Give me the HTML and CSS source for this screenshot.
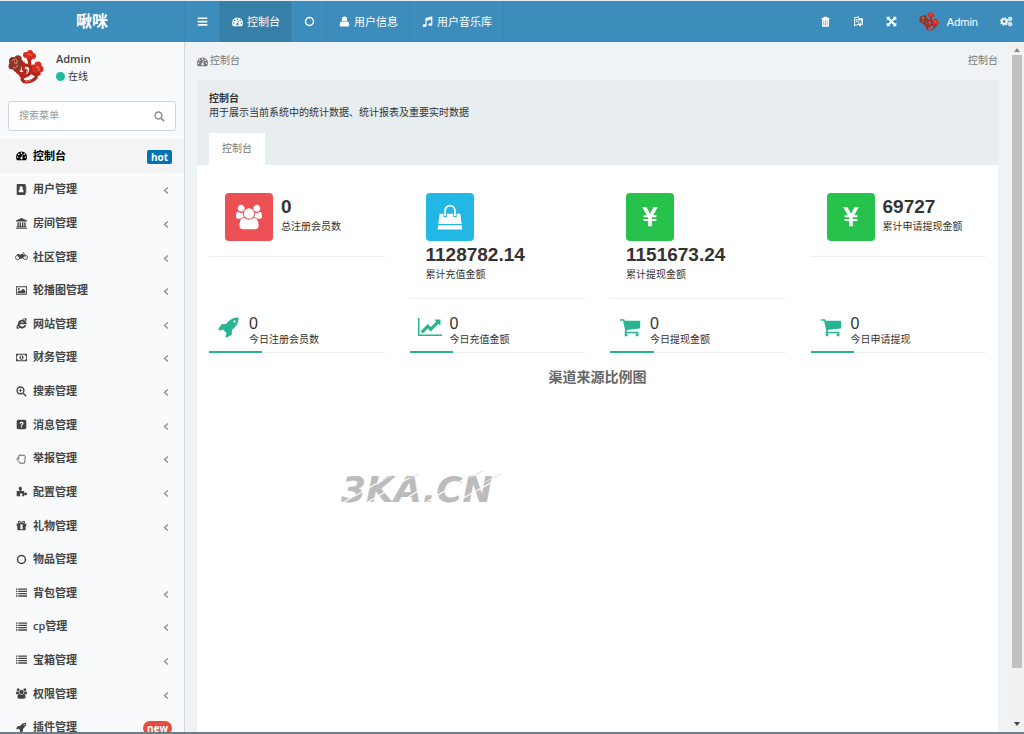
FILE: index.html
```html
<!DOCTYPE html>
<html lang="zh-CN">
<head>
<meta charset="utf-8">
<title>控制台</title>
<link rel="stylesheet" href="styles.css">
</head>
<body>
<svg class="sprite" aria-hidden="true">
  <symbol id="dashboard" viewBox="0 0 1792 1792"><path d="M384 1152q0-53-37.500-90.500t-90.500-37.500-90.500 37.500-37.500 90.500 37.500 90.500 90.500 37.500 90.500-37.500 37.500-90.500zm192-448q0-53-37.500-90.500t-90.500-37.500-90.500 37.500-37.500 90.500 37.500 90.500 90.500 37.500 90.500-37.500 37.500-90.500zm428 481l101-382q6-26-7.500-48.500t-38.500-29.500-48 6.500-30 39.500l-101 382q-60 5-107 43.500t-63 98.500q-20 77 20 146t117 89 146-20 89-117q16-60-6-117t-72-91zm660-33q0-53-37.500-90.500t-90.500-37.500-90.500 37.500-37.500 90.500 37.500 90.500 90.500 37.500 90.500-37.500 37.500-90.500zm-640-640q0-53-37.500-90.500t-90.500-37.500-90.500 37.500-37.500 90.500 37.500 90.500 90.500 37.500 90.500-37.500 37.500-90.500zm448 192q0-53-37.500-90.500t-90.500-37.500-90.500 37.500-37.500 90.500 37.500 90.500 90.500 37.500 90.500-37.500 37.500-90.500zm320 448q0 261-141 483-19 29-54 29h-1402q-35 0-54-29-141-221-141-483 0-182 71-348t191-286 286-191 348-71 348 71 286 191 191 286 71 348z"/></symbol>
  <symbol id="users" viewBox="0 0 1920 1792"><path d="M593 896q-162 5-265 128h-134q-82 0-138-40.500t-56-118.500q0-353 124-353 6 0 43.500 21t97.500 42.500 119 21.500q67 0 133-23-5 37-5 66 0 139 81 256zm1071 637q0 120-73 189.500t-194 69.500h-874q-121 0-194-69.500t-73-189.500q0-53 3.500-103.500t14-109 26.500-108.500 43-97.500 62-81 85.500-53.500 111.500-20q10 0 43 21.500t73 48 107 48 135 21.500 135-21.500 107-48 73-48 43-21.500q61 0 111.500 20t85.500 53.500 62 81 43 97.500 26.500 108.500 14 109 3.500 103.500zm-1024-1277q0 106-75 181t-181 75-181-75-75-181 75-181 181-75 181 75 75 181zm704 384q0 159-112.500 271.500t-271.500 112.500-271.500-112.500-112.500-271.500 112.500-271.500 271.500-112.500 271.500 112.500 112.500 271.500zm576 225q0 78-56 118.500t-138 40.500h-134q-103-123-265-128 81-117 81-256 0-29-5-66 66 23 133 23 59 0 119-21.500t97.500-42.500 43.500-21q124 0 124 353zm-128-609q0 106-75 181t-181 75-181-75-75-181 75-181 181-75 181 75 75 181z"/></symbol>
  <symbol id="cart" viewBox="0 0 1792 1792"><path d="M704 1536q0 52-38 90t-90 38-90-38-38-90 38-90 90-38 90 38 38 90zm896 0q0 52-38 90t-90 38-90-38-38-90 38-90 90-38 90 38 38 90zm128-1088v512q0 24-16.500 42.500t-40.500 21.500l-1044 122q13 60 13 70 0 16-24 64h920q26 0 45 19t19 45-19 45-45 19h-1024q-26 0-45-19t-19-45q0-11 8-31.500t16-36 21.500-40 15.500-29.500l-177-823h-204q-26 0-45-19t-19-45 19-45 45-19h256q16 0 28.500 6.500t19.500 15.500 13 24.500 8 26 5.500 29.500 4.500 26h1201q26 0 45 19t19 45z"/></symbol>
  <symbol id="rocket" viewBox="0 0 1792 1792"><path d="M1440 448q0-40-28-68t-68-28-68 28-28 68 28 68 68 28 68-28 28-68zm224-288q0 249-75.500 430.500t-253.500 360.500q-81 80-195 176l-20 379q-2 16-16 26l-384 224q-7 4-16 4-12 0-23-9l-64-64q-13-14-8-32l85-276-281-281-276 85q-3 1-9 1-14 0-23-9l-64-64q-17-19-5-39l224-384q10-14 26-16l379-20q96-114 176-195 188-187 358-258t431-71q14 0 24 9.500t10 22.500z"/></symbol>
  <symbol id="chart" viewBox="0 0 2048 1792"><path d="M2048 1536v128h-2048v-1536h128v1408h1920zm-128-1248v435q0 21-19.500 29.500t-35.500-7.500l-121-121-633 633q-10 10-23 10t-23-10l-233-233-416 416-192-192 585-585q10-10 23-10t23 10l233 233 464-464-121-121q-16-16-7.500-35.500t29.500-19.500h435q14 0 23 9t9 23z"/></symbol>
  <symbol id="bag" viewBox="0 0 24 24"><path d="M2.500 9h19l1.300 9.500H1.200zM1 19.500h22l.3 4H.7z"/><path d="M7.500 12V6a4.500 4.500 0 0 1 9 0v6" fill="none" stroke="#23b7e5" stroke-width="3.200"/><path d="M7.500 11V6a4.500 4.500 0 0 1 9 0v5" fill="none" stroke="currentColor" stroke-width="1.700"/></symbol>
  <symbol id="yen" viewBox="0 0 24 24"><path d="M3.500 1h4.600L12 8.500 15.900 1h4.600l-5 9H19v2.200h-5v1.900h5v2.300h-5V22h-4v-5.600H5v-2.300h5v-1.900H5V10h3.500z"/></symbol>
  <symbol id="bars" viewBox="0 0 16 16"><path d="M1 2h14v2.500H1zM1 6.800h14v2.500H1zM1 11.600h14v2.500H1z"/></symbol>
  <symbol id="circle" viewBox="0 0 16 16"><circle cx="8" cy="8" r="5.800" fill="none" stroke="currentColor" stroke-width="2.200"/></symbol>
  <symbol id="user" viewBox="0 0 16 16"><circle cx="8" cy="4.500" r="3.900"/><path d="M4.500 7.500c2 2 5 2 7 0 2.400.4 3.500 3 3.500 5.500 0 1.500-1 2.300-2.200 2.300H3.200C2 15.300 1 14.500 1 13c0-2.500 1.100-5.100 3.500-5.500z"/></symbol>
  <symbol id="music" viewBox="0 0 16 16"><path d="M5 3l10-2.500V12c0 1.400-1.300 2.300-3 2.300s-2.700-.7-2.700-1.800 1.200-2 2.700-2c.5 0 .9.100 1.300.3V5.200L6.700 7v6.700c0 1.300-1.300 2.200-3 2.200S1 15.200 1 14s1.200-1.900 2.700-1.900c.5 0 .9.100 1.300.2z"/></symbol>
  <symbol id="trash" viewBox="0 0 16 16"><path fill-rule="evenodd" d="M5.500 1h5l.8 1.800H14v1.700h-1V14c0 .8-.6 1.500-1.400 1.500H4.400C3.600 15.500 3 14.800 3 14V4.500H2V2.800h2.700zM5.200 6v7h.8V6zm2.400 0v7h.8V6zM10 6v7h.8V6z"/></symbol>
  <symbol id="language" viewBox="0 0 16 16"><path fill-rule="evenodd" d="M1.500 2L8 .5l1 2.300 5.500 1V13L11 12.500l1 3-4-2.500-6.500 1.500zm1.300 1.200v9.600L8 11.500V2zM9.800 5L8.600 10.800l1.100.3.300-1.300 1.700.4.300 1.500 1.100.3L11.300 5.400z"/><path d="M3.500 5.500l4-.8M5.500 4v2c0 2-1 3-2 3.500M4 7c.9 1.300 2 1.800 3.400 2" fill="none" stroke="currentColor" stroke-width="1"/></symbol>
  <symbol id="expand" viewBox="0 0 16 16"><path d="M1 1h5.500L4.800 2.700 8 5.900l3.200-3.200L9.500 1H15v5.500l-1.700-1.700L10.100 8l3.200 3.200L15 9.500V15H9.500l1.700-1.700L8 10.100l-3.200 3.200L6.500 15H1V9.500l1.700 1.700L5.900 8 2.700 4.800 1 6.500z"/></symbol>
  <symbol id="cogs" viewBox="0 0 20 16"><g fill="none" stroke="currentColor"><circle cx="6.500" cy="8" r="3.700" stroke-width="2.900"/><circle cx="6.500" cy="8" r="5.700" stroke-width="1.600" stroke-dasharray="2.240"/><circle cx="15.500" cy="4" r="2" stroke-width="1.900"/><circle cx="15.500" cy="4" r="3.200" stroke-width="1.200" stroke-dasharray="1.260"/><circle cx="15.500" cy="12" r="2" stroke-width="1.900"/><circle cx="15.500" cy="12" r="3.200" stroke-width="1.200" stroke-dasharray="1.260"/></g></symbol>
  <symbol id="book" viewBox="0 0 16 16"><path fill-rule="evenodd" d="M2.500 0h10c.8 0 1.500.6 1.500 1.500v2.300h1v2h-1v1.200h1v2h-1v1.200h1v2h-1v2.300c0 .9-.7 1.500-1.500 1.500h-10C1.600 16 1 15.400 1 14.500v-13C1 .6 1.600 0 2.500 0zm5 3.200a2.300 2.300 0 0 0-1.600 4C4.500 7.600 3.900 9.500 3.900 12h7.200c0-2.500-.6-4.400-2-4.800a2.300 2.300 0 0 0-1.600-4z"/></symbol>
  <symbol id="bank" viewBox="0 0 16 16"><path d="M8 0l8 3.500V5H0V3.500zM2 6h2v6h1.300V6h2v6h1.400V6h2v6H12V6h2v6h1v1.300H1V12h1zM0 14h16v1.600H0z"/></symbol>
  <symbol id="motorcycle" viewBox="0 0 20 16"><g fill="none" stroke="currentColor"><circle cx="4" cy="9.500" r="3.300" stroke-width="1.300"/><circle cx="16" cy="9.500" r="3.300" stroke-width="1.300"/><path d="M4 9.500l3-3h5M11 2.500h2.500L16 9.500" stroke-width="1.300"/></g><path d="M3 4.500c2-1 4 0 5 .8 1-1.200 3-1.800 5-.8l1 2.500-3 4.500H6.500C7 8 5.500 6 3 6z"/></symbol>
  <symbol id="image" viewBox="0 0 18 16"><path fill-rule="evenodd" d="M0 1h18v14H0zM1.400 2.500v11h15.200v-11z"/><circle cx="4.500" cy="5.500" r="1.600"/><path d="M2.700 12.300v-2.600l2.500-2.300 1.700 1.700L11.500 5l3.800 3.500v3.800z"/></symbol>
  <symbol id="ie" viewBox="0 0 16 16"><path d="M13.700 10.600A5 5 0 1 1 13.900 7.800H5" fill="none" stroke="currentColor" stroke-width="2.800"/><path d="M2.300 9C0 13 0 16 3 15.500c1.400-.2 3-1.200 4-2L5.500 13c-3 2-3.600.4-2.400-2zM9 1.500C12 0 15.300-.6 15.500 2c.1 1.200-.4 2.600-1 3.500l-1-1.500c.8-2-.4-2.500-3-1.600z"/></symbol>
  <symbol id="money" viewBox="0 0 18 16"><path fill-rule="evenodd" d="M0 2h18v12H0zm3.500 1.300c0 1.200-.9 2-2.200 2v5.400c1.300 0 2.200.8 2.200 2h11c0-1.200.9-2 2.200-2V5.300c-1.300 0-2.200-.8-2.200-2zM9 4.200c2 0 3.300 1.600 3.300 3.800S11 11.800 9 11.800 5.700 10.200 5.700 8 7 4.200 9 4.200zM7.500 6.500v1h.8v2.300h-.8v.8h3v-.8h-.8V5.300h-.9z"/></symbol>
  <symbol id="zoom" viewBox="0 0 16 16"><circle cx="6.500" cy="6.500" r="5" fill="none" stroke="currentColor" stroke-width="2"/><path d="M10 11.500l1.500-1.500 4 4-1.500 1.600zM3.800 6h2.100V3.800h1.200V6h2.100v1.200H7.100v2.100H5.900V7.200H3.800z"/></symbol>
  <symbol id="search" viewBox="0 0 16 16"><circle cx="6.500" cy="6.500" r="5" fill="none" stroke="currentColor" stroke-width="2"/><path d="M9.800 11.500l1.700-1.700 4 4-1.600 1.700z"/></symbol>
  <symbol id="question" viewBox="0 0 16 16"><path fill-rule="evenodd" d="M3.500 1h9C14 1 15 2 15 3.500v9c0 1.500-1 2.500-2.500 2.500h-9C2 15 1 14 1 12.500v-9C1 2 2 1 3.500 1zM5 6l1.600.8C7.400 5.400 9 5.700 9 6.500c0 1-2 1.300-2 3.300h1.800c0-1.400 2.200-1.600 2.200-3.600C11 3.400 6.300 2.800 5 6zm2 4.700v1.800h1.800v-1.800z"/></symbol>
  <symbol id="hand" viewBox="0 0 16 16"><path d="M4 9V4.300c0-1.600 1.900-1.600 2.100-.3 0-1.800 2-2 2.400-.4.200-1.400 2.300-1.300 2.300.5.400-1.200 2.400-1.100 2.400.8v5.400c0 1-.8 2-1 4.500H5.700c0-1.700-4-4.500-4.400-6C1 7.300 3 7.200 4 9z" fill="none" stroke="currentColor" stroke-width="1.200"/></symbol>
  <symbol id="puzzle" viewBox="0 0 16 16"><path d="M1 7c1.200.4 3 .6 4 .2C5.800 6.700 4 5 4 3.500 4 2 5 1 6.300 1s2.300 1 2.300 2.500C8.600 5 7.300 6 8 7c1.200.5 2.600.2 4-.2v3.500c1 .5 1.300-.8 2.500-.8 2 0 2 4 0 4-1.200 0-1.600-1-2.500-.8V15H8.800c-.4-1 .8-1.300.8-2.500 0-2-4-2-4 0 0 1.200 1.200 1.500.8 2.500H1z"/></symbol>
  <symbol id="gift" viewBox="0 0 16 16"><path fill-rule="evenodd" d="M1 5h3.200C2 4 2.600 1 4.800 1 6.300 1 7.200 2.300 8 3.600 8.800 2.300 9.700 1 11.200 1c2.200 0 2.800 3 .6 4H15v4h-1v5c0 .6-.4 1-1 1H3c-.6 0-1-.4-1-1V9H1zm3.800-2.600c-1 0-1 1.600 0 1.600H7c-.6-.9-1.300-1.600-2.200-1.600zm6.400 0C10.300 2.400 9.600 3.100 9 4h2.200c1 0 1-1.600 0-1.600zM6.300 6v7.500h3.400V6z"/></symbol>
  <symbol id="list" viewBox="0 0 16 16"><path d="M0 2h2v2H0zM3.300 2H16v2H3.300zM0 5.300h2v2H0zM3.300 5.300H16v2H3.300zM0 8.600h2v2H0zM3.300 8.600H16v2H3.300zM0 12h2v2H0zM3.300 12H16v2H3.300z"/></symbol>
  <symbol id="angle" viewBox="0 0 8 12"><path d="M6.500 2L2 6l4.500 4" fill="none" stroke="currentColor" stroke-width="1.600"/></symbol>
  <symbol id="emblem" viewBox="0 0 36 36">
    <g fill="#d92c20"><circle cx="18" cy="5" r="3"/><circle cx="22" cy="3" r="3"/><circle cx="25" cy="6" r="3"/><circle cx="21.500" cy="8" r="3"/><circle cx="30" cy="15" r="3.500"/><circle cx="32" cy="19" r="3.500"/><circle cx="29" cy="22" r="3.500"/><circle cx="25" cy="18" r="3.500"/></g>
    <g fill="#8c3427"><circle cx="5" cy="11" r="4"/><circle cx="10" cy="9" r="3.700"/><circle cx="12" cy="13" r="3.500"/><circle cx="4" cy="16" r="3.500"/><circle cx="9" cy="18" r="4"/></g>
    <path d="M21 9l1 6M8 20c3 5 8 5 10 1-4-1-4-6 1-6 5 1 5 7 1 10-3 2-6 1-6 4 1 5 12 3 15-3M16 18c-2-2-2-4 1-5M22 21c4 4 7 5 10 2M12 24c1 3 3 2 5 1" fill="none" stroke="#b3251c" stroke-width="3.200"/>
    <path d="M4 11c2-3 6-2 5 1s-4 1-2-1M5 17c2 2 5 0 4-2M19 5c1-2 4-1 4 1M28 17c3-1 4 2 2 4M18 18c2 1 2 3 0 4M17 31c4 1 6-1 8-3" fill="none" stroke="#efa07e" stroke-width=".9"/>
  </symbol>
</svg>

<div class="app">
  <header class="topbar">
    <a class="brand" href="#">啾咪</a>
    <nav class="tabs">
      <button class="tab" aria-label="折叠菜单"><svg class="icon"><use href="#bars"/></svg></button>
      <a class="tab tab-active" href="#"><svg class="icon"><use href="#dashboard"/></svg>控制台</a>
      <a class="tab" href="#" aria-label="物品管理"><svg class="icon"><use href="#circle"/></svg></a>
      <a class="tab" href="#"><svg class="icon"><use href="#user"/></svg>用户信息</a>
      <a class="tab" href="#"><svg class="icon"><use href="#music"/></svg>用户音乐库</a>
    </nav>
    <div class="tools">
      <button class="tool" aria-label="清除缓存"><svg class="icon"><use href="#trash"/></svg></button>
      <button class="tool" aria-label="语言"><svg class="icon"><use href="#language"/></svg></button>
      <button class="tool" aria-label="全屏"><svg class="icon"><use href="#expand"/></svg></button>
      <button class="tool account"><svg class="avatar-small"><use href="#emblem"/></svg>Admin</button>
      <button class="tool" aria-label="设置"><svg class="icon icon-wide"><use href="#cogs"/></svg></button>
    </div>
  </header>

  <div class="body">
    <aside class="sidebar">
      <div class="profile">
        <svg class="avatar"><use href="#emblem"/></svg>
        <div>
          <div class="profile-name">Admin</div>
          <div class="status"><span class="dot"></span>在线</div>
        </div>
      </div>
      <form class="search">
        <input class="search-input" type="text" placeholder="搜索菜单" aria-label="搜索菜单">
        <button class="search-button" type="button" aria-label="搜索"><svg class="icon"><use href="#search"/></svg></button>
      </form>
      <nav class="menu">
        <a class="item item-active" href="#"><svg class="icon"><use href="#dashboard"/></svg><span>控制台</span><span class="badge badge-hot">hot</span></a>
        <a class="item" href="#"><svg class="icon"><use href="#book"/></svg><span>用户管理</span><svg class="angle"><use href="#angle"/></svg></a>
        <a class="item" href="#"><svg class="icon"><use href="#bank"/></svg><span>房间管理</span><svg class="angle"><use href="#angle"/></svg></a>
        <a class="item" href="#"><svg class="icon icon-wide"><use href="#motorcycle"/></svg><span>社区管理</span><svg class="angle"><use href="#angle"/></svg></a>
        <a class="item" href="#"><svg class="icon"><use href="#image"/></svg><span>轮播图管理</span><svg class="angle"><use href="#angle"/></svg></a>
        <a class="item" href="#"><svg class="icon"><use href="#ie"/></svg><span>网站管理</span><svg class="angle"><use href="#angle"/></svg></a>
        <a class="item" href="#"><svg class="icon"><use href="#money"/></svg><span>财务管理</span><svg class="angle"><use href="#angle"/></svg></a>
        <a class="item" href="#"><svg class="icon"><use href="#zoom"/></svg><span>搜索管理</span><svg class="angle"><use href="#angle"/></svg></a>
        <a class="item" href="#"><svg class="icon"><use href="#question"/></svg><span>消息管理</span><svg class="angle"><use href="#angle"/></svg></a>
        <a class="item" href="#"><svg class="icon"><use href="#hand"/></svg><span>举报管理</span><svg class="angle"><use href="#angle"/></svg></a>
        <a class="item" href="#"><svg class="icon"><use href="#puzzle"/></svg><span>配置管理</span><svg class="angle"><use href="#angle"/></svg></a>
        <a class="item" href="#"><svg class="icon"><use href="#gift"/></svg><span>礼物管理</span><svg class="angle"><use href="#angle"/></svg></a>
        <a class="item" href="#"><svg class="icon"><use href="#circle"/></svg><span>物品管理</span></a>
        <a class="item" href="#"><svg class="icon"><use href="#list"/></svg><span>背包管理</span><svg class="angle"><use href="#angle"/></svg></a>
        <a class="item" href="#"><svg class="icon"><use href="#list"/></svg><span>cp管理</span><svg class="angle"><use href="#angle"/></svg></a>
        <a class="item" href="#"><svg class="icon"><use href="#list"/></svg><span>宝箱管理</span><svg class="angle"><use href="#angle"/></svg></a>
        <a class="item" href="#"><svg class="icon"><use href="#users"/></svg><span>权限管理</span><svg class="angle"><use href="#angle"/></svg></a>
        <a class="item" href="#"><svg class="icon"><use href="#rocket"/></svg><span>插件管理</span><span class="badge badge-new">new</span></a>
      </nav>
    </aside>

    <main class="content">
      <div class="crumbs">
        <a class="crumb" href="#"><svg class="icon"><use href="#dashboard"/></svg>控制台</a>
        <span>控制台</span>
      </div>
      <section class="panel">
        <div class="panel-head">
          <h1 class="panel-title">控制台</h1>
          <p class="panel-text">用于展示当前系统中的统计数据、统计报表及重要实时数据</p>
          <a class="panel-tab" href="#">控制台</a>
        </div>
        <div class="panel-body">
          <div class="totals">
            <div class="total"><div class="tile red"><svg class="tile-icon"><use href="#users"/></svg></div><div class="total-text"><div class="total-number">0</div><div class="total-label">总注册会员数</div></div></div>
            <div class="total"><div class="tile blue"><svg class="tile-icon"><use href="#bag"/></svg></div><div class="total-text"><div class="total-number">1128782.14</div><div class="total-label">累计充值金额</div></div></div>
            <div class="total"><div class="tile green"><svg class="tile-icon tile-yen"><use href="#yen"/></svg></div><div class="total-text"><div class="total-number">1151673.24</div><div class="total-label">累计提现金额</div></div></div>
            <div class="total"><div class="tile green"><svg class="tile-icon tile-yen"><use href="#yen"/></svg></div><div class="total-text"><div class="total-number">69727</div><div class="total-label">累计申请提现金额</div></div></div>
          </div>
          <div class="today">
            <div class="daily"><div class="daily-main"><svg class="daily-icon"><use href="#rocket"/></svg><div><div class="daily-number">0</div><div class="daily-label">今日注册会员数</div></div></div><div class="track"><div class="bar" style="width:30%"></div></div></div>
            <div class="daily"><div class="daily-main"><svg class="daily-icon"><use href="#chart"/></svg><div><div class="daily-number">0</div><div class="daily-label">今日充值金额</div></div></div><div class="track"><div class="bar" style="width:25%"></div></div></div>
            <div class="daily"><div class="daily-main"><svg class="daily-icon"><use href="#cart"/></svg><div><div class="daily-number">0</div><div class="daily-label">今日提现金额</div></div></div><div class="track"><div class="bar" style="width:25%"></div></div></div>
            <div class="daily"><div class="daily-main"><svg class="daily-icon"><use href="#cart"/></svg><div><div class="daily-number">0</div><div class="daily-label">今日申请提现</div></div></div><div class="track"><div class="bar" style="width:25%"></div></div></div>
          </div>
          <h2 class="chart-title">渠道来源比例图</h2>
          <svg class="watermark" viewBox="0 0 180 48">
            <text class="watermark-text" x="4" y="34">3KA.CN</text>
            <path d="M-2 39L46 12M24 38L72 10M52 41L102 10M80 40L132 8M108 40L170 6" stroke="#fff" stroke-width="1.300"/>
            <path d="M46 12l10-5M72 11l10-5M132 10l14-7M148 14l16-8" stroke="#ddd" stroke-width="1"/>
          </svg>
        </div>
      </section>
    </main>

    <div class="scrollbar" aria-hidden="true">
      <span class="arrow-up"></span>
      <span class="thumb"></span>
      <span class="arrow-down"></span>
    </div>
  </div>
</div>
</body>
</html>
```

FILE: styles.css
```css
* { box-sizing: border-box; }
body {
  margin: 0;
  font: 10px/16px "Liberation Sans", "Noto Sans CJK SC", sans-serif;
  color: #333;
}
a { color: inherit; text-decoration: none; }
button { border: 0; padding: 0; background: none; color: inherit; font: inherit; cursor: pointer; }
h1, h2, p { margin: 0; }
.sprite { display: none; }
.icon { width: 11px; height: 11px; flex: none; fill: currentColor; }
.icon-wide { width: 13px; }

.app {
  display: flex;
  flex-direction: column;
  height: 100vh;
  overflow: hidden;
  border-top: 1px solid #e4eef4;
  border-bottom: 2px solid #6e7d88;
}

/* Top bar */
.topbar { display: flex; flex: none; height: 41px; background: #3c8dbc; color: #fff; }
.brand {
  width: 185px;
  flex: none;
  border-right: 1px solid #3986b4;
  font-size: 16px;
  font-weight: bold;
  line-height: 41px;
  text-align: center;
}
.tabs { display: flex; flex: 1; font-size: 11px; }
.tab {
  display: flex;
  align-items: center;
  gap: 4px;
  padding: 0 11px 0 12px;
  border-right: 1px solid #3986b4;
}
.tab-active { background: #367fa9; }
.tools { display: flex; align-items: center; gap: 22px; padding-right: 11px; font-size: 11px; }
.tool { display: flex; align-items: center; }
.account { gap: 8px; }
.avatar-small { width: 20px; height: 20px; }

.body { display: flex; flex: 1; min-height: 0; }

/* Sidebar */
.sidebar {
  display: flex;
  flex-direction: column;
  flex: none;
  width: 185px;
  border-right: 1px solid #d2d6de;
  background: #f9fafc;
}
.profile { display: flex; gap: 12px; padding: 8px 8px 0; }
.avatar { width: 36px; height: 36px; }
.profile-name { font: 600 11px/18px "Open Sans", sans-serif; color: #444; }
.status { display: flex; align-items: center; gap: 3px; line-height: 17px; }
.dot { width: 9px; height: 9px; border-radius: 50%; background: #1abc9c; }
.search {
  display: flex;
  align-items: center;
  flex: none;
  height: 30px;
  margin: 15px 8px 8px;
  padding: 0 10px;
  border: 1px solid #d2d6de;
  border-radius: 3px;
  background: #fff;
}
.search-input { flex: 1; min-width: 0; padding: 0; border: 0; outline: 0; background: none; font: inherit; }
.search-input::placeholder { color: #999; }
.search-button { display: flex; color: #888; }

/* The last row runs past the lower edge of the window. */
.menu { display: grid; grid-auto-rows: 1fr; flex: 1; margin-bottom: -12px; }
.item {
  display: flex;
  align-items: center;
  gap: 6px;
  padding: 0 12px 0 16px;
  color: #444;
  font-family: "Open Sans", "Noto Sans CJK SC", sans-serif;
  font-size: 11px;
  font-weight: 600;
}
.item .icon-wide { margin: 0 -1px; }
.item-active { background: #f4f4f5; color: #000; }
.angle { width: 6px; height: 9px; margin: 3px 3px 0 auto; color: #888; }
.badge {
  margin: 2px 0 0 auto;
  padding: 0 4px;
  border-radius: 2px;
  color: #fff;
  font-size: 10px;
  font-weight: bold;
  line-height: 14px;
}
.badge-hot { background: #0073b7; }
.badge-new { padding: 0 4px; border-radius: 7px; background: #e74c3c; }

/* Content */
.content { display: flex; flex-direction: column; flex: 1; min-width: 0; padding: 0 12px; background: #eff3f6; }
.crumbs { display: flex; align-items: center; justify-content: space-between; flex: none; height: 38px; color: #777; }
.crumb { display: flex; align-items: center; gap: 2px; }
.panel { display: flex; flex-direction: column; flex: 1; background: #fff; }
.panel-head { padding: 12px 12px 0; background: #e8edf0; }
.panel-title { font-size: 10px; line-height: 14px; }
.panel-text { line-height: 14px; }
.panel-tab { display: inline-block; margin-top: 13px; padding: 0 13px; background: #fff; color: #777; line-height: 32px; }
.panel-body { position: relative; flex: 1; padding: 12px; }
.totals, .today { display: grid; grid-template-columns: repeat(4, 1fr); gap: 25px; align-items: start; }
.total {
  display: flex;
  flex-wrap: wrap;
  column-gap: 8px;
  padding: 16px 16px 15px;
  border-bottom: 1px solid #eee;
}
.tile { display: flex; align-items: center; justify-content: center; width: 48px; height: 48px; border-radius: 4px; color: #fff; }
.red { background: #ed5054; }
.blue { background: #23b7e5; }
.green { background: #27c24c; }
.tile-icon { width: 26px; height: 26px; fill: currentColor; }
.tile-yen { width: 22px; height: 22px; }
.total-text { padding-top: 2px; }
.total-number { font-size: 19px; font-weight: bold; line-height: 24px; }
.today { margin-top: 17px; }
.daily-main { display: flex; align-items: flex-start; gap: 8px; padding-left: 8px; }
.daily-icon { width: 24px; height: 22px; color: #27b493; fill: currentColor; }
.daily-number { font-size: 16px; line-height: 16px; }
.daily-label { line-height: 15px; }
.track { height: 2px; margin-top: 4px; border-bottom: 1px solid #eee; }
.bar { height: 2px; background: #27b493; }
.chart-title { margin-top: 14px; color: #666; font-size: 14px; line-height: 20px; text-align: center; }
.watermark { position: absolute; top: 303px; left: 140px; width: 180px; height: 48px; }
.watermark-text { fill: #bcbcbc; font: italic bold 36px "DejaVu Sans", sans-serif; }

/* Scroll bar */
.scrollbar {
  display: flex;
  flex-direction: column;
  align-items: center;
  flex: none;
  width: 14px;
  padding: 6px 0;
  background: #f1f1f1;
}
.thumb { flex: 1; width: 10px; margin: 3px 0 54px; background: #c1c1c1; }
.arrow-up, .arrow-down { border: 3px solid transparent; }
.arrow-up { border-top: 0; border-bottom: 4px solid #888; }
.arrow-down { border-bottom: 0; border-top: 4px solid #444; }
```
